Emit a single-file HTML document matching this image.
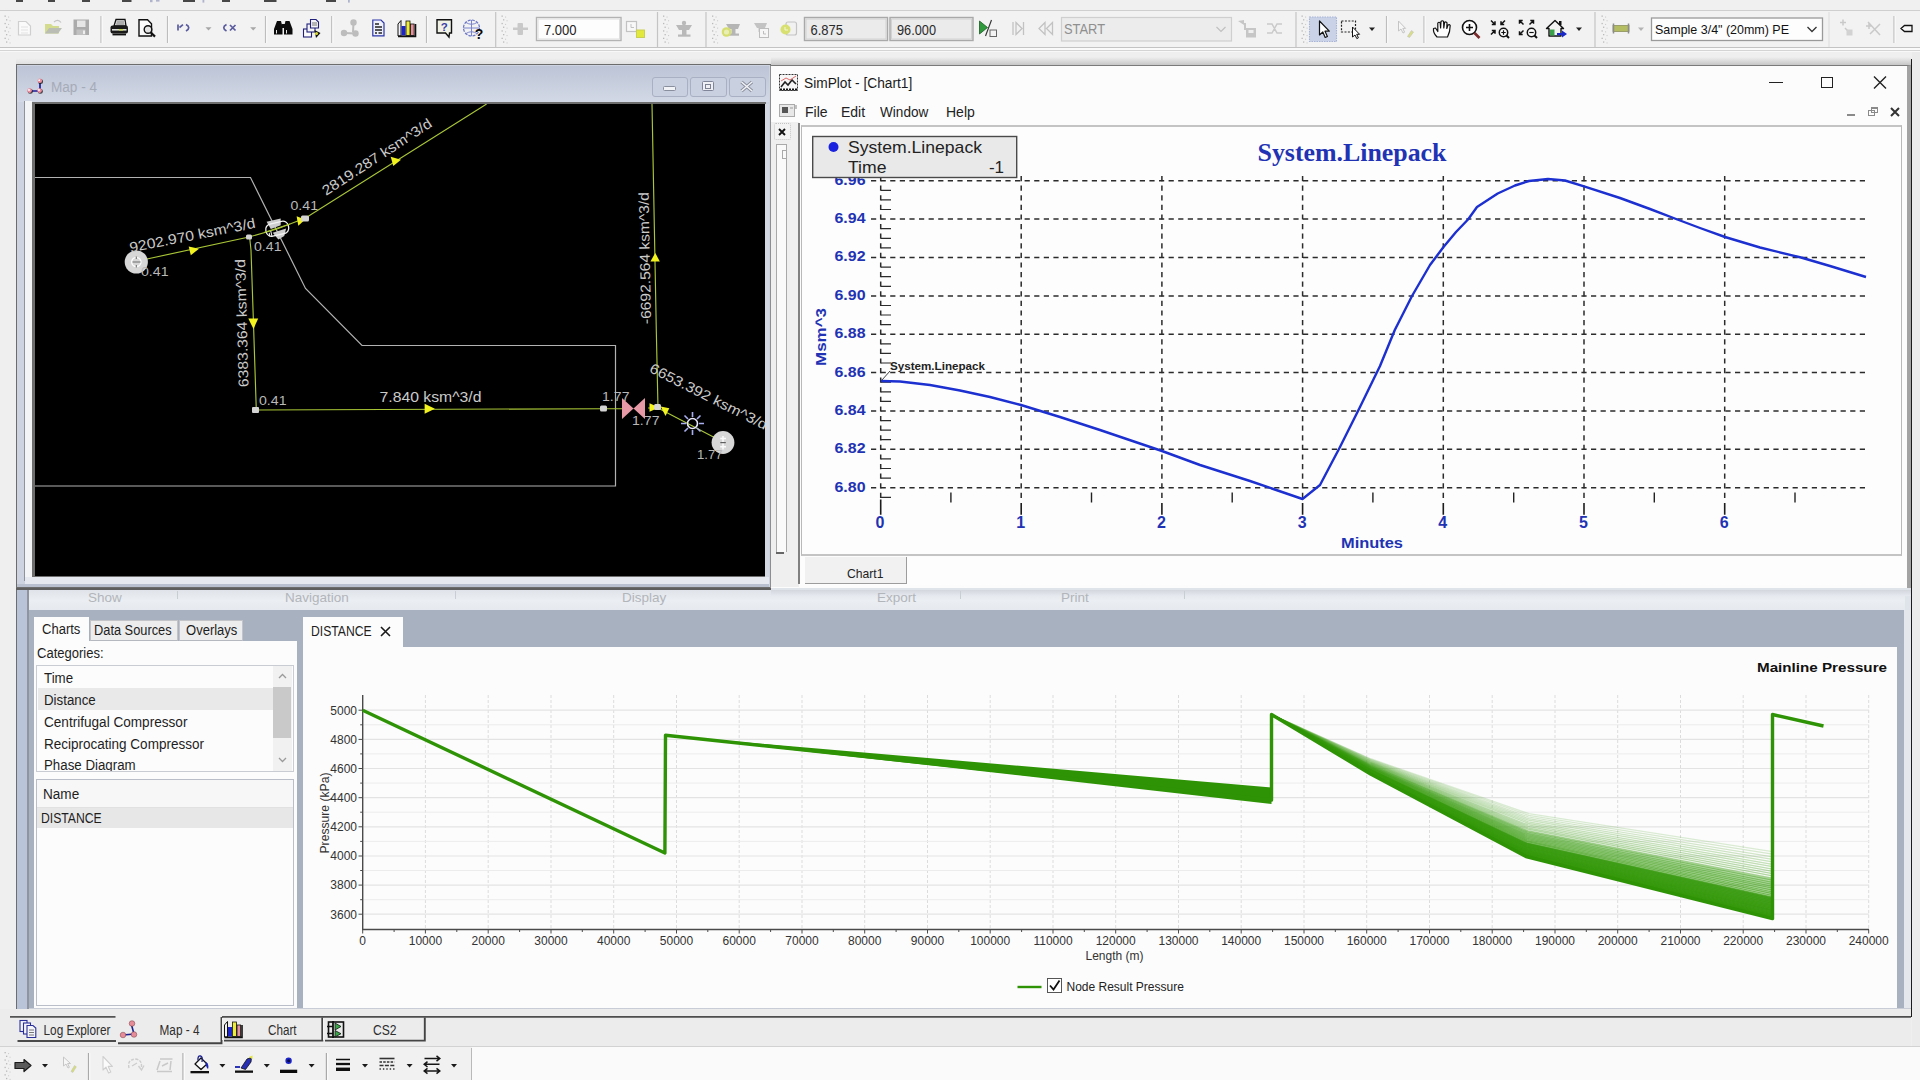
<!DOCTYPE html>
<html>
<head>
<meta charset="utf-8">
<title>SimPlot</title>
<style>
html,body{margin:0;padding:0;}
body{width:1920px;height:1080px;position:relative;overflow:hidden;background:#efefef;font-family:"Liberation Sans",sans-serif;font-size:14px;color:#222;}
.a{position:absolute;}
.t{position:absolute;white-space:pre;line-height:1;}
.sx{display:inline-block;transform-origin:0 50%;}
svg{position:absolute;overflow:visible;}
</style>
</head>
<body>

<!-- ===== TOP TOOLBAR ===== -->
<div id="topbar" class="a" style="left:0;top:0;width:1920px;height:52px;background:#f0f0f0;">
  <div class="a" style="left:0;top:10px;width:1920px;height:1.3px;background:#cfcfcf;"></div>
  <div class="a" style="left:0;top:11.3px;width:1920px;height:36px;background:#f2f2f2;"></div>
  <div class="a" style="left:0;top:47px;width:1920px;height:1.3px;background:#c3c3c3;"></div>
  <div class="a" style="left:0;top:48.3px;width:1920px;height:1.4px;background:#fafafa;"></div>
  <div class="a" style="left:0;top:49.7px;width:1920px;height:1px;background:#d4d4d4;"></div>
  <div class="a" style="left:0;top:50.7px;width:1920px;height:1.3px;background:#f8f8f8;"></div>
</div>
<svg style="left:0;top:0;" width="1920" height="52" viewBox="0 0 1920 52" font-family="Liberation Sans, sans-serif">
  <!-- menu remnants -->
  <g fill="#2a2a2a" opacity=".85">
    <rect x="16" y="0" width="7" height="2"/><rect x="48" y="0" width="7" height="2"/><rect x="82" y="0" width="8" height="2"/><rect x="122" y="0" width="9.5" height="2"/><rect x="183" y="0" width="12" height="2"/><rect x="222" y="0" width="8" height="2"/><rect x="264" y="0" width="12.5" height="2"/><rect x="326" y="0" width="10" height="2"/>
  </g>
  <g fill="#7c82b0" opacity=".55"><rect x="150" y="0" width="2.5" height="2.2"/><rect x="156" y="0" width="3.5" height="1.6"/><rect x="202.5" y="0" width="1.8" height="2.6"/><rect x="348" y="0" width="1.8" height="2.6"/></g>
  <rect x="4.5" y="15.5" width="1.3" height="1.3" fill="#b9b9b9"/><rect x="8.0" y="16.5" width="1.1" height="1.1" fill="#cdcdcd"/><rect x="6.0" y="19.2" width="1.3" height="1.3" fill="#b9b9b9"/><rect x="9.5" y="20.2" width="1.1" height="1.1" fill="#cdcdcd"/><rect x="4.5" y="22.9" width="1.3" height="1.3" fill="#b9b9b9"/><rect x="8.0" y="23.9" width="1.1" height="1.1" fill="#cdcdcd"/><rect x="6.0" y="26.6" width="1.3" height="1.3" fill="#b9b9b9"/><rect x="9.5" y="27.6" width="1.1" height="1.1" fill="#cdcdcd"/><rect x="4.5" y="30.3" width="1.3" height="1.3" fill="#b9b9b9"/><rect x="8.0" y="31.3" width="1.1" height="1.1" fill="#cdcdcd"/><rect x="6.0" y="34.0" width="1.3" height="1.3" fill="#b9b9b9"/><rect x="9.5" y="35.0" width="1.1" height="1.1" fill="#cdcdcd"/><rect x="4.5" y="37.7" width="1.3" height="1.3" fill="#b9b9b9"/><rect x="8.0" y="38.7" width="1.1" height="1.1" fill="#cdcdcd"/><rect x="6.0" y="41.4" width="1.3" height="1.3" fill="#b9b9b9"/><rect x="9.5" y="42.4" width="1.1" height="1.1" fill="#cdcdcd"/>
  <!-- new -->
  <path d="M18.5 21.5 L26 21.5 L30.5 26 L30.5 35 L18.5 35 Z" fill="#fafafa" stroke="#cfcfcf" stroke-width="1.2"/>
  <path d="M21 27 L28 27 M21 30 L28 30 M21 33 L28 33" stroke="#e2e2e2" stroke-width="1"/>
  <!-- open -->
  <path d="M45 24 L51 24 L53 26 L59 26 L59 33.5 L45 33.5 Z" fill="#d3dc8c"/>
  <path d="M45 33.5 L49 28 L62 28 L58 33.5 Z" fill="#b9bdb4"/>
  <path d="M54 22 Q58 18.5 61 22.5" stroke="#c4c4c4" stroke-width="1.2" fill="none"/>
  <!-- save -->
  <rect x="73.5" y="19.5" width="15.5" height="15.5" fill="#ababab"/>
  <rect x="77" y="20.5" width="8.5" height="6.5" fill="#e6e6e6"/>
  <rect x="76.5" y="29.5" width="9" height="5.5" fill="#c1c1c1"/><rect x="83" y="30.5" width="2" height="3.5" fill="#eee"/>
  <path d="M101 16 L101 43" stroke="#bdbdbd" stroke-width="1.2"/><path d="M102.2 16 L102.2 43" stroke="#fbfbfb" stroke-width="1"/>
  <!-- print -->
  <path d="M114 26 L116 19.5 L125 19.5 L126 26 Z" fill="#f4f4f4" stroke="#111" stroke-width="1.3"/>
  <path d="M116.5 22 L124 22 M116.2 24 L124.5 24" stroke="#444" stroke-width=".8"/>
  <rect x="110.5" y="25.5" width="17.5" height="8" rx="2" fill="#1a1a1a"/>
  <rect x="112" y="29" width="14.5" height="1.6" fill="#dcdcdc"/><rect x="119" y="29" width="4" height="1.6" fill="#c8d94a"/>
  <path d="M112.5 34.5 L126 34.5" stroke="#111" stroke-width="1.8"/>
  <!-- preview -->
  <path d="M139 19.8 L147.5 19.8 L151.5 23.8 L151.5 36 L139 36 Z" fill="#fbfbfb" stroke="#111" stroke-width="1.4"/>
  <circle cx="148" cy="29.5" r="3.8" fill="#e4e4e4" stroke="#111" stroke-width="1.4"/>
  <path d="M150.8 32.5 L155 36.6" stroke="#111" stroke-width="2.2"/>
  <path d="M167.5 16 L167.5 43" stroke="#bdbdbd" stroke-width="1.2"/><path d="M168.7 16 L168.7 43" stroke="#fbfbfb" stroke-width="1"/>
  <!-- undo / redo -->
  <g stroke="#383a8c" stroke-width="1.7" fill="none" opacity=".82">
    <path d="M178 24.5 L178 30.5"/><path d="M179.5 27.5 L183 24.7"/><path d="M186 24.6 Q191.5 27.5 186 31"/>
    <path d="M226.5 24.6 Q221 27.5 226.5 31"/><path d="M230 25 L235.5 30.5 M235.5 25 L230 30.5"/>
  </g>
  <path d="M205.5 27.2 L211.5 27.2 L208.5 30.599999999999998 Z" fill="#a7a7a7"/><path d="M250.2 27.2 L256.2 27.2 L253.2 30.599999999999998 Z" fill="#a7a7a7"/>
  <path d="M265.5 16 L265.5 43" stroke="#bdbdbd" stroke-width="1.2"/><path d="M266.7 16 L266.7 43" stroke="#fbfbfb" stroke-width="1"/>
  <!-- binoculars -->
  <g fill="#0c0c0c">
    <path d="M277 21 L281 21 L282.5 27 L282.5 34.5 L274 34.5 L274 29 Z"/>
    <path d="M285.5 21 L289.5 21 L292.5 29 L292.5 34.5 L284 34.5 L284 27 Z"/>
    <rect x="281.5" y="24" width="4" height="4"/>
  </g>
  <path d="M276.5 30 L276.5 33.5 M286.5 30 L286.5 33.5" stroke="#fff" stroke-width=".9"/>
  <!-- copy -->
  <rect x="303.5" y="29" width="8" height="8" fill="#fbfbfb" stroke="#20207a" stroke-width="1.1"/>
  <rect x="307" y="24" width="8" height="8" fill="#f4f4f4" stroke="#20207a" stroke-width="1.1"/>
  <path d="M310.5 19.5 L316 19.5 L318.5 22 L318.5 28 L310.5 28 Z" fill="#f4f4f4" stroke="#20207a" stroke-width="1.1"/>
  <path d="M312 23 L317 23 M312 25 L317 25" stroke="#555" stroke-width=".8"/>
  <path d="M314.5 30 L320.5 33 L316 38 Z" fill="#111"/><circle cx="316.5" cy="33.5" r="1.6" fill="#d9d936"/>
  <path d="M331.7 16 L331.7 43" stroke="#bdbdbd" stroke-width="1.2"/><path d="M332.9 16 L332.9 43" stroke="#fbfbfb" stroke-width="1"/>
  <!-- faded network -->
  <g fill="#bdbdbd"><circle cx="353.5" cy="22.5" r="3.2"/><circle cx="344" cy="33" r="3.2"/><circle cx="355.5" cy="33.5" r="3.2"/></g>
  <path d="M353.5 23 L353 32 M345 33 L355 33.5" stroke="#bdbdbd" stroke-width="2"/>
  <!-- doc blue -->
  <path d="M372.8 20 L381 20 L384 23 L384 35.8 L372.8 35.8 Z" fill="#eef0fb" stroke="#2b34a8" stroke-width="1.2"/>
  <path d="M375 24 L379 24 M375 27 L382 27 M375 30 L382 30 M375 33 L377 33 M378.5 33 L382 33" stroke="#222" stroke-width="1.3"/>
  <!-- books chart -->
  <path d="M398 24 L401 20.5 L401 36 L398 36 Z" fill="#f2f2f2" stroke="#111" stroke-width="1"/>
  <rect x="401.5" y="26" width="4" height="9.5" fill="#1a24c8"/>
  <rect x="406" y="21" width="4" height="14.5" fill="#ecec3a" stroke="#111" stroke-width=".8"/>
  <rect x="410.5" y="24" width="3.6" height="11.5" fill="#e5929c" stroke="#111" stroke-width=".8"/>
  <path d="M398 36.4 L415.5 36.4 L415.5 24" stroke="#111" stroke-width="1.6" fill="none"/>
  <path d="M426.5 16 L426.5 43" stroke="#bdbdbd" stroke-width="1.2"/><path d="M427.7 16 L427.7 43" stroke="#fbfbfb" stroke-width="1"/>
  <!-- help -->
  <path d="M437 19.8 L451.5 19.8 L451.5 33 L449.5 33 L449 37 L445.5 33 L437 33 Z" fill="#f0f2e6" stroke="#111" stroke-width="1.4"/>
  <text x="444.3" y="30.5" text-anchor="middle" font-size="11.5" font-weight="bold" fill="#3a40a8">?</text>
  <!-- globe -->
  <circle cx="471.5" cy="28" r="8" fill="none" stroke="#6a74c4" stroke-width="1.2" stroke-dasharray="3 1.2"/>
  <path d="M463.5 28 L479.5 28 M471.5 20 L471.5 36 M466 22.5 Q471.5 26 477 22.5 M466 33.5 Q471.5 30 477 33.5" stroke="#7a84cc" stroke-width="1" fill="none"/>
  <text x="479" y="38.5" text-anchor="middle" font-size="14" font-weight="bold" fill="#0a0a0a">?</text>
  <path d="M495.7 12 L495.7 47" stroke="#c4c4c4" stroke-width="1.2"/>
  <rect x="501.5" y="15.5" width="1.3" height="1.3" fill="#b9b9b9"/><rect x="505.0" y="16.5" width="1.1" height="1.1" fill="#cdcdcd"/><rect x="503.0" y="19.2" width="1.3" height="1.3" fill="#b9b9b9"/><rect x="506.5" y="20.2" width="1.1" height="1.1" fill="#cdcdcd"/><rect x="501.5" y="22.9" width="1.3" height="1.3" fill="#b9b9b9"/><rect x="505.0" y="23.9" width="1.1" height="1.1" fill="#cdcdcd"/><rect x="503.0" y="26.6" width="1.3" height="1.3" fill="#b9b9b9"/><rect x="506.5" y="27.6" width="1.1" height="1.1" fill="#cdcdcd"/><rect x="501.5" y="30.3" width="1.3" height="1.3" fill="#b9b9b9"/><rect x="505.0" y="31.3" width="1.1" height="1.1" fill="#cdcdcd"/><rect x="503.0" y="34.0" width="1.3" height="1.3" fill="#b9b9b9"/><rect x="506.5" y="35.0" width="1.1" height="1.1" fill="#cdcdcd"/><rect x="501.5" y="37.7" width="1.3" height="1.3" fill="#b9b9b9"/><rect x="505.0" y="38.7" width="1.1" height="1.1" fill="#cdcdcd"/><rect x="503.0" y="41.4" width="1.3" height="1.3" fill="#b9b9b9"/><rect x="506.5" y="42.4" width="1.1" height="1.1" fill="#cdcdcd"/>
  <!-- faded -->
  <g fill="#c9c9c9"><rect x="517.5" y="23" width="5.5" height="12" rx="1"/><rect x="513" y="27.5" width="15" height="2.5"/></g>
  <rect x="536.5" y="17.5" width="84.5" height="23" fill="#fdfdfd" stroke="#b3b3b3" stroke-width="1.4"/>
  <rect x="538" y="19" width="81.5" height="20" fill="none" stroke="#dedede" stroke-width="1"/>
  <text x="544" y="34.5" font-size="14.5" fill="#222" textLength="32.5" lengthAdjust="spacingAndGlyphs">7.000</text>
  <rect x="626.5" y="21.5" width="10" height="10" fill="#f8f8f8" stroke="#c2c2c2" stroke-width="1.2"/><path d="M631 24 L631 27.5 L634 27.5" stroke="#c2c2c2" stroke-width="1" fill="none"/>
  <rect x="636.5" y="30" width="8" height="7.5" fill="#e3e83c" stroke="#c9cf50" stroke-width="1"/>
  <path d="M657.5 12 L657.5 47" stroke="#c4c4c4" stroke-width="1.2"/>
  <rect x="663" y="15.5" width="1.3" height="1.3" fill="#b9b9b9"/><rect x="666.5" y="16.5" width="1.1" height="1.1" fill="#cdcdcd"/><rect x="664.5" y="19.2" width="1.3" height="1.3" fill="#b9b9b9"/><rect x="668.0" y="20.2" width="1.1" height="1.1" fill="#cdcdcd"/><rect x="663" y="22.9" width="1.3" height="1.3" fill="#b9b9b9"/><rect x="666.5" y="23.9" width="1.1" height="1.1" fill="#cdcdcd"/><rect x="664.5" y="26.6" width="1.3" height="1.3" fill="#b9b9b9"/><rect x="668.0" y="27.6" width="1.1" height="1.1" fill="#cdcdcd"/><rect x="663" y="30.3" width="1.3" height="1.3" fill="#b9b9b9"/><rect x="666.5" y="31.3" width="1.1" height="1.1" fill="#cdcdcd"/><rect x="664.5" y="34.0" width="1.3" height="1.3" fill="#b9b9b9"/><rect x="668.0" y="35.0" width="1.1" height="1.1" fill="#cdcdcd"/><rect x="663" y="37.7" width="1.3" height="1.3" fill="#b9b9b9"/><rect x="666.5" y="38.7" width="1.1" height="1.1" fill="#cdcdcd"/><rect x="664.5" y="41.4" width="1.3" height="1.3" fill="#b9b9b9"/><rect x="668.0" y="42.4" width="1.1" height="1.1" fill="#cdcdcd"/>
  <g fill="#b9b9b9"><path d="M676 25 L692 25 L689 30 L679 30 Z"/><rect x="682" y="29" width="4.5" height="6"/><rect x="678" y="34.5" width="12.5" height="2.2"/><circle cx="684" cy="23" r="2.2"/></g>
  <path d="M706 12 L706 47" stroke="#c4c4c4" stroke-width="1.2"/>
  <rect x="712" y="15.5" width="1.3" height="1.3" fill="#b9b9b9"/><rect x="715.5" y="16.5" width="1.1" height="1.1" fill="#cdcdcd"/><rect x="713.5" y="19.2" width="1.3" height="1.3" fill="#b9b9b9"/><rect x="717.0" y="20.2" width="1.1" height="1.1" fill="#cdcdcd"/><rect x="712" y="22.9" width="1.3" height="1.3" fill="#b9b9b9"/><rect x="715.5" y="23.9" width="1.1" height="1.1" fill="#cdcdcd"/><rect x="713.5" y="26.6" width="1.3" height="1.3" fill="#b9b9b9"/><rect x="717.0" y="27.6" width="1.1" height="1.1" fill="#cdcdcd"/><rect x="712" y="30.3" width="1.3" height="1.3" fill="#b9b9b9"/><rect x="715.5" y="31.3" width="1.1" height="1.1" fill="#cdcdcd"/><rect x="713.5" y="34.0" width="1.3" height="1.3" fill="#b9b9b9"/><rect x="717.0" y="35.0" width="1.1" height="1.1" fill="#cdcdcd"/><rect x="712" y="37.7" width="1.3" height="1.3" fill="#b9b9b9"/><rect x="715.5" y="38.7" width="1.1" height="1.1" fill="#cdcdcd"/><rect x="713.5" y="41.4" width="1.3" height="1.3" fill="#b9b9b9"/><rect x="717.0" y="42.4" width="1.1" height="1.1" fill="#cdcdcd"/>
  <g fill="#b5b5b5"><path d="M726 24 L740 24 L738 29 L729 29 Z"/><rect x="731.5" y="28" width="4" height="6"/><rect x="728" y="33.5" width="11" height="2.2"/></g>
  <circle cx="726.5" cy="32" r="4.8" fill="#d5de6e"/><circle cx="726.5" cy="32" r="2.6" fill="#e9eeb4"/>
  <g fill="#c3c3c3"><path d="M754 23 L767 23 L765 28 L757 28 Z"/><rect x="758.5" y="27" width="4" height="5"/></g>
  <rect x="759.5" y="28.5" width="9" height="9" fill="#f6f6f6" stroke="#bdbdbd" stroke-width="1"/><path d="M763.5 31 L763.5 34 L766 34" stroke="#bdbdbd" fill="none"/>
  <rect x="786" y="22" width="10.5" height="13" rx="2" fill="#f1f1f1" stroke="#c4c4c4" stroke-width="1.2"/>
  <circle cx="785.5" cy="29.5" r="5" fill="#d7e070"/><path d="M785 27 L785 30 L788 30" stroke="#f4f6d4" fill="none"/>
  <rect x="804.5" y="17.5" width="83" height="23" fill="#ebebeb" stroke="#a9a9a9" stroke-width="1.4"/>
  <rect x="806" y="19" width="80" height="20" fill="none" stroke="#d2d2d2" stroke-width="1"/>
  <text x="810.5" y="34.5" font-size="14.5" fill="#2a2a2a" textLength="32.5" lengthAdjust="spacingAndGlyphs">6.875</text>
  <rect x="890" y="17.5" width="83" height="23" fill="#ebebeb" stroke="#a9a9a9" stroke-width="1.4"/>
  <rect x="891.5" y="19" width="80" height="20" fill="none" stroke="#d2d2d2" stroke-width="1"/>
  <text x="897" y="34.5" font-size="14.5" fill="#2a2a2a" textLength="39" lengthAdjust="spacingAndGlyphs">96.000</text>
  <!-- play -->
  <path d="M979.5 21 L979.5 34 L987.5 27.5 Z" fill="#2f9a3c" stroke="#1a5a22" stroke-width=".8"/>
  <path d="M991.5 20 L985.5 36" stroke="#333" stroke-width="1.2"/>
  <rect x="990" y="30" width="6.5" height="6.5" fill="#f4f4f4" stroke="#666" stroke-width="1"/>
  <g fill="none" stroke="#c2c2c2" stroke-width="1.3"><path d="M1013 22 L1013 35 M1016 22.5 L1022 28.5 L1016 34.5 Z M1023.5 22 L1023.5 35"/><path d="M1045 22.5 L1039 28.5 L1045 34.5 Z M1052.5 22.5 L1046.5 28.5 L1052.5 34.5 Z"/></g>
  <rect x="1061.5" y="17.5" width="170" height="23.5" fill="#ececec" stroke="#cfcfcf" stroke-width="1.2"/>
  <text x="1064" y="34" font-size="14.5" fill="#8f8f8f" textLength="41" lengthAdjust="spacingAndGlyphs">START</text>
  <path d="M1216.5 27 L1221 31.5 L1225.5 27" stroke="#c0c0c0" stroke-width="1.2" fill="none"/>
  <g fill="#c6c6c6"><path d="M1238 21 L1244 25 L1244 20 Z"/><rect x="1244" y="23" width="2" height="7"/><rect x="1246" y="28" width="10" height="9.5"/></g>
  <rect x="1248.5" y="30" width="5" height="3" fill="#efefef"/>
  <path d="M1267 24 L1272 24 L1277 33 L1282 33 M1267 33 L1272 33 L1277 24 L1282 24" stroke="#cacaca" stroke-width="1.5" fill="none"/>
  <path d="M1296 12 L1296 47" stroke="#c4c4c4" stroke-width="1.2"/>
  <rect x="1301.5" y="15.5" width="1.3" height="1.3" fill="#b9b9b9"/><rect x="1305.0" y="16.5" width="1.1" height="1.1" fill="#cdcdcd"/><rect x="1303.0" y="19.2" width="1.3" height="1.3" fill="#b9b9b9"/><rect x="1306.5" y="20.2" width="1.1" height="1.1" fill="#cdcdcd"/><rect x="1301.5" y="22.9" width="1.3" height="1.3" fill="#b9b9b9"/><rect x="1305.0" y="23.9" width="1.1" height="1.1" fill="#cdcdcd"/><rect x="1303.0" y="26.6" width="1.3" height="1.3" fill="#b9b9b9"/><rect x="1306.5" y="27.6" width="1.1" height="1.1" fill="#cdcdcd"/><rect x="1301.5" y="30.3" width="1.3" height="1.3" fill="#b9b9b9"/><rect x="1305.0" y="31.3" width="1.1" height="1.1" fill="#cdcdcd"/><rect x="1303.0" y="34.0" width="1.3" height="1.3" fill="#b9b9b9"/><rect x="1306.5" y="35.0" width="1.1" height="1.1" fill="#cdcdcd"/><rect x="1301.5" y="37.7" width="1.3" height="1.3" fill="#b9b9b9"/><rect x="1305.0" y="38.7" width="1.1" height="1.1" fill="#cdcdcd"/><rect x="1303.0" y="41.4" width="1.3" height="1.3" fill="#b9b9b9"/><rect x="1306.5" y="42.4" width="1.1" height="1.1" fill="#cdcdcd"/>
  <!-- pointer selected -->
  <rect x="1309.5" y="17" width="27" height="24.5" fill="#c9d2e7" stroke="#a7b4d6" stroke-width="1.1" stroke-dasharray="1.5 1"/>
  <path d="M1319.5 21 L1319.5 35 L1322.8 32 L1325.2 37.5 L1327.4 36.5 L1325 31.2 L1329.3 31.2 Z" fill="#fff" stroke="#111" stroke-width="1.2" stroke-linejoin="round"/>
  <!-- select rect -->
  <rect x="1341.5" y="21" width="14" height="11" fill="none" stroke="#222" stroke-width="1.2" stroke-dasharray="2 1.4"/>
  <path d="M1352.5 27 L1352.5 37 L1355 35 L1356.8 38.6 L1358.4 37.8 L1356.7 34.3 L1359.6 34.3 Z" fill="#fff" stroke="#111" stroke-width="1"/>
  <path d="M1369 27.5 L1375 27.5 L1372 30.9 Z" fill="#222"/>
  <path d="M1386.5 16 L1386.5 43" stroke="#bdbdbd" stroke-width="1.2"/><path d="M1387.7 16 L1387.7 43" stroke="#fbfbfb" stroke-width="1"/>
  <path d="M1398.5 21 L1398.5 31 L1401 29 L1403 33 L1404.6 32.2 L1402.8 28.4 L1405.6 28.4 Z" fill="#f6f6f6" stroke="#c4c4c4" stroke-width="1"/>
  <path d="M1407.5 36.5 L1411.5 30.5 L1413.5 32 L1409.5 37.5 Z" fill="#d9df7c" stroke="#c4c4c4" stroke-width=".7"/>
  <path d="M1424 16 L1424 43" stroke="#bdbdbd" stroke-width="1.2"/><path d="M1425.2 16 L1425.2 43" stroke="#fbfbfb" stroke-width="1"/>
  <!-- hand -->
  <path d="M1437 37 Q1433 33 1433.5 28.5 L1435.5 28 L1437.8 31.5 L1437.8 23 Q1439 21.5 1440.2 23 L1440.6 28 L1441 21.5 Q1442.3 20 1443.6 21.5 L1443.8 28 L1444.6 22.5 Q1446 21.3 1447 22.8 L1446.8 28.5 L1448 25 Q1449.5 24 1450.2 25.6 Q1450.2 32 1447.5 37 Z" fill="#fdfdfd" stroke="#111" stroke-width="1.2" stroke-linejoin="round"/>
  <!-- zoom + -->
  <circle cx="1469.5" cy="27.5" r="7" fill="#fdfdfd" stroke="#111" stroke-width="1.6"/>
  <path d="M1466 27.5 L1473 27.5 M1469.5 24 L1469.5 31" stroke="#111" stroke-width="1.6"/>
  <path d="M1474.5 33 L1479.5 38" stroke="#7a2a2a" stroke-width="2.6"/>
  <!-- zoom region + -->
  <g stroke="#111" stroke-width="1.5" fill="none">
    <path d="M1491 20.5 L1495 24.5 M1495 21.3 L1495 24.5 L1491.8 24.5 M1505 20.5 L1501 24.5 M1501 21.3 L1501 24.5 L1504.2 24.5 M1491 34.5 L1495 30.5 M1495 33.7 L1495 30.5 L1491.8 30.5"/>
    <circle cx="1503.5" cy="32.5" r="4.2" fill="#fdfdfd"/><path d="M1501.3 32.5 L1505.7 32.5 M1503.5 30.3 L1503.5 34.7" stroke-width="1.2"/><path d="M1506.5 35.5 L1509 38" stroke-width="2"/>
  </g>
  <!-- zoom region - -->
  <g stroke="#111" stroke-width="1.5" fill="none">
    <path d="M1523.5 24.5 L1519.5 20.5 M1519.5 23.7 L1519.5 20.5 L1522.7 20.5 M1529.5 24.5 L1533.5 20.5 M1533.5 23.7 L1533.5 20.5 L1530.3 20.5 M1523.5 30.5 L1519.5 34.5 M1519.5 31.3 L1519.5 34.5 L1522.7 34.5"/>
    <circle cx="1531.5" cy="32.5" r="4.2" fill="#fdfdfd"/><path d="M1529.3 32.5 L1533.7 32.5" stroke-width="1.2"/><path d="M1534.5 35.5 L1537 38" stroke-width="2"/>
  </g>
  <!-- home -->
  <path d="M1546.5 28.5 L1555 20.5 L1563.5 28.5 L1561 28.5 L1561 36 L1549 36 L1549 28.5 Z" fill="#f2f2f2" stroke="#111" stroke-width="1.4" stroke-linejoin="round"/>
  <rect x="1550" y="29.5" width="4.5" height="6" fill="#3aa04a"/>
  <path d="M1557 33 L1562 33 L1562 30.5 L1567 34 L1562 37.5 L1562 35.2 L1557 35.2 Z" fill="#1a28c8"/>
  <rect x="1559" y="21" width="2.5" height="4" fill="#111"/>
  <path d="M1576 27.5 L1582 27.5 L1579 30.9 Z" fill="#222"/>
  <path d="M1595 12 L1595 47" stroke="#c4c4c4" stroke-width="1.2"/>
  <rect x="1601.5" y="15.5" width="1.3" height="1.3" fill="#b9b9b9"/><rect x="1605.0" y="16.5" width="1.1" height="1.1" fill="#cdcdcd"/><rect x="1603.0" y="19.2" width="1.3" height="1.3" fill="#b9b9b9"/><rect x="1606.5" y="20.2" width="1.1" height="1.1" fill="#cdcdcd"/><rect x="1601.5" y="22.9" width="1.3" height="1.3" fill="#b9b9b9"/><rect x="1605.0" y="23.9" width="1.1" height="1.1" fill="#cdcdcd"/><rect x="1603.0" y="26.6" width="1.3" height="1.3" fill="#b9b9b9"/><rect x="1606.5" y="27.6" width="1.1" height="1.1" fill="#cdcdcd"/><rect x="1601.5" y="30.3" width="1.3" height="1.3" fill="#b9b9b9"/><rect x="1605.0" y="31.3" width="1.1" height="1.1" fill="#cdcdcd"/><rect x="1603.0" y="34.0" width="1.3" height="1.3" fill="#b9b9b9"/><rect x="1606.5" y="35.0" width="1.1" height="1.1" fill="#cdcdcd"/><rect x="1601.5" y="37.7" width="1.3" height="1.3" fill="#b9b9b9"/><rect x="1605.0" y="38.7" width="1.1" height="1.1" fill="#cdcdcd"/><rect x="1603.0" y="41.4" width="1.3" height="1.3" fill="#b9b9b9"/><rect x="1606.5" y="42.4" width="1.1" height="1.1" fill="#cdcdcd"/>
  <rect x="1613" y="25.5" width="16" height="6" fill="#b5bd62" stroke="#8a8f5c" stroke-width=".8"/>
  <path d="M1613.5 23.5 L1613.5 33.5 M1628.5 23.5 L1628.5 33.5" stroke="#8c8c8c" stroke-width="1.5"/>
  <path d="M1638 27.5 L1644 27.5 L1641 30.9 Z" fill="#b3b3b3"/>
  <rect x="1651.5" y="18" width="171" height="22.5" fill="#fdfdfd" stroke="#9a9a9a" stroke-width="1.3"/>
  <text x="1655" y="33.5" font-size="13.5" fill="#111" textLength="134" lengthAdjust="spacingAndGlyphs">Sample  3/4" (20mm) PE</text>
  <path d="M1807.5 27 L1812 31.5 L1816.5 27" stroke="#333" stroke-width="1.3" fill="none"/>
  <path d="M1829 12 L1829 47" stroke="#dcdcdc" stroke-width="1"/>
  <g stroke="#c9c9c9" stroke-width="1.5" fill="none"><path d="M1840 22.5 L1846 22.5 M1843 19.5 L1843 25.5"/><path d="M1845 28 L1848 31"/><rect x="1846.5" y="29.5" width="6" height="6" fill="#d2d2d2" stroke="none"/>
  <path d="M1868 22 L1880 35 M1880 24 L1870 34 M1866 26 L1872 26 M1869 23 L1869 29"/></g>
  <path d="M1894 16 L1894 43" stroke="#bdbdbd" stroke-width="1.2"/><path d="M1895.2 16 L1895.2 43" stroke="#fbfbfb" stroke-width="1"/>
  <path d="M1901 28.5 L1904.5 25.5 L1912 25.5 L1912 31.5 L1904.5 31.5 Z" fill="#f8f8f8" stroke="#111" stroke-width="1.3"/>
</svg>

<!-- ===== MAP WINDOW ===== -->
<div id="mapwin" class="a" style="left:15.5px;top:64px;width:755px;height:524px;background:#cdd3e0;box-sizing:border-box;border:1.6px solid #6c6c6c;border-right:1.2px solid #666;"></div>
<!-- map title bar -->
<div class="a" style="left:17px;top:65.6px;width:752px;height:36px;background:linear-gradient(#bdc4d6,#c6cddc 45%,#d3d9e6);"></div>
<div class="t" style="left:50.5px;top:80px;font-size:14px;color:#a6abb8;"><span class="sx" style="transform:scaleX(.97)">Map - 4</span></div>
<svg style="left:26px;top:76px;" width="22" height="22" viewBox="0 0 22 22">
  <path d="M4 15 L14 15 L14 5" stroke="#1d1d9a" stroke-width="1.7" fill="none"/>
  <circle cx="4.3" cy="15.3" r="2.5" fill="#1a1a1a" opacity=".8"/><circle cx="14.3" cy="15.3" r="2.5" fill="#1a1a1a" opacity=".8"/><circle cx="14.5" cy="5.5" r="2.5" fill="#1a1a1a" opacity=".8"/>
  <circle cx="3.6" cy="14.6" r="2.3" fill="#ee8fa0"/><circle cx="13.6" cy="14.6" r="2.3" fill="#ee8fa0"/><circle cx="13.8" cy="4.8" r="2.3" fill="#ee8fa0"/>
  <circle cx="3" cy="14" r=".9" fill="#fff"/><circle cx="13" cy="14" r=".9" fill="#fff"/><circle cx="13.2" cy="4.2" r=".9" fill="#fff"/>
</svg>
<!-- map caption buttons -->
<div class="a" style="left:651.5px;top:76.5px;width:36.5px;height:20px;border:1px solid #a9b0c4;border-radius:3px;background:#c9d0df;box-sizing:border-box;"></div>
<div class="a" style="left:690.3px;top:76.5px;width:36.5px;height:20px;border:1px solid #a9b0c4;border-radius:3px;background:#c9d0df;box-sizing:border-box;"></div>
<div class="a" style="left:729px;top:76.5px;width:37px;height:20px;border:1px solid #a9b0c4;border-radius:3px;background:#c9d0df;box-sizing:border-box;"></div>
<div class="a" style="left:663px;top:85.8px;width:12.5px;height:5.5px;border:1.2px solid #8a8f9e;border-radius:1.5px;background:#f2f3f6;box-sizing:border-box;"></div>
<div class="a" style="left:701.7px;top:81.2px;width:12.5px;height:10.2px;border:1.3px solid #80859a;border-radius:1.5px;background:#eef0f4;box-sizing:border-box;"></div>
<div class="a" style="left:704.7px;top:84.2px;width:6.5px;height:4.4px;border:1.2px solid #7d8294;box-sizing:border-box;"></div>
<svg style="left:740px;top:80.8px;" width="14" height="11" viewBox="0 0 14 11"><path d="M1.5 1 L12 10 M12 1 L1.5 10" stroke="#8a8f9e" stroke-width="3.4"/><path d="M1.5 1 L12 10 M12 1 L1.5 10" stroke="#f2f3f6" stroke-width="1.5"/></svg>
<!-- map frame -->
<div class="a" style="left:24.3px;top:100.5px;width:1px;height:480px;background:#8e929c;"></div>
<div class="a" style="left:25.3px;top:100.5px;width:7px;height:478px;background:#f3f4f6;"></div>
<div class="a" style="left:32.3px;top:101.6px;width:734px;height:476px;background:#6e6e6e;"></div>
<div class="a" style="left:765.3px;top:103.8px;width:3.9px;height:476px;background:#d3d8e3;"></div>
<div class="a" style="left:25.3px;top:576.5px;width:744px;height:7px;background:#e6e9ef;"></div>
<div class="a" style="left:17px;top:583.5px;width:752px;height:3px;background:#b9c0cf;"></div>
<div id="mapblack" class="a" style="left:35.3px;top:103.8px;width:730px;height:472.4px;background:#000;overflow:hidden;">
<svg style="left:-35.3px;top:-103.8px;" width="1920" height="1080" viewBox="0 0 1920 1080" font-family="Liberation Sans, sans-serif">
  <!-- gray polygon outline -->
  <path d="M35 177.5 L250.5 177.5 L305.5 288.5 L362 345.5 L615.5 345.5 L615.5 486 L35 486" fill="none" stroke="#b2b2b2" stroke-width="1.2"/>
  <!-- pipes -->
  <g stroke="#a9c636" stroke-width="1.15" fill="none">
    <path d="M147 259 L249 237 L277 229 L305.5 218 L486.6 104"/>
    <path d="M249.6 237 L251 250 L253.7 330 L256.3 410 L603 408.7 L622 408.7"/>
    <path d="M652 104 L656.3 330 L658 408 L648 408"/>
    <path d="M658 408 L723 442"/>
  </g>
  <!-- arrows -->
  <g fill="#f2f21e">
    <path d="M188.7 246.6 L199.0 248.7 L190.8 255.2 Z"/>
    <path d="M296.6 216.2 L305.2 219.6 L298.3 225.7 Z"/>
    <path d="M390.7 156.7 L401.0 159.7 L393.3 166.1 Z"/>
    <path d="M248.3 318.6 L258.2 318.6 L253.5 328.9 Z"/>
    <path d="M424.6 403.8 L434.9 408.7 L424.6 413.7 Z"/>
    <path d="M650.8 251.5 L660.2 251.5 L655.3 260.1 Z" transform="rotate(180 655.3 256.5)"/>
    <path d="M649.5 403.2 L659.0 407.5 L649.5 411.8 Z"/>
    <path d="M660.7 406.6 L669.3 408.3 L665.5 416.1 Z"/>
  </g>
  <!-- nodes -->
  <g fill="#d4d4d4">
    <rect x="246" y="234.5" width="6" height="5" rx="1.5"/>
    <rect x="301" y="215.5" width="8" height="6" rx="1.5"/>
    <rect x="252" y="407" width="7" height="6" rx="1"/>
    <rect x="600" y="405.5" width="7" height="6" rx="1.5"/>
    <rect x="654" y="404" width="7" height="6" rx="1.5"/>
  </g>
  <!-- source/sink circles -->
  <circle cx="136.3" cy="262" r="11.6" fill="#d7d7d7"/>
  <circle cx="136.3" cy="262" r="4.6" fill="none" stroke="#fbfbfb" stroke-width="1.5"/>
  <path d="M132.5 262 L140.5 262 M136.3 256.5 L136.3 259 M136.3 265 L136.3 267.5" stroke="#6e6e6e" stroke-width="1.1"/>
  <circle cx="723" cy="442.5" r="11.4" fill="#d7d7d7"/>
  <path d="M720.2 438.5 L726 438.5 M720.2 446.8 L726 446.8 M723 436 L723 449.5" stroke="#fbfbfb" stroke-width="1.5"/>
  <path d="M720.3 442.6 L725.8 442.6" stroke="#5e5e5e" stroke-width="1.2"/>
  <!-- compressor-ish device -->
  <g transform="rotate(-13 277.3 229)">
    <path d="M268.5 219.5 L283 219.5 L281.5 226 L271 227.5 Z" fill="#cdcdcd"/>
    <path d="M272 231.5 L286 230.5 L282.5 237.5 L276 239.5 Z" fill="#cdcdcd"/>
    <rect x="265.8" y="222.5" width="23" height="12.5" rx="5.5" fill="none" stroke="#f2f2f2" stroke-width="1.3"/>
    <path d="M270.5 229 L270.5 235 M268.5 231 L268.5 234.5" stroke="#f2f2f2" stroke-width="1"/>
  </g>
  <path d="M264 232.5 L290 224" stroke="#a9c636" stroke-width="1.15"/>
  <!-- valve -->
  <path d="M622 398 L645 419 L645 398 L622 419 Z" fill="#e79aa6"/>
    <!-- star symbol -->
  <g stroke="#a9aef0" stroke-width="1.6" fill="none">
    <circle cx="692.5" cy="423.5" r="5" stroke="#e8e8ff"/>
    <path d="M692.5 412 L692.5 417 M692.5 430 L692.5 435 M681 423.5 L686 423.5 M699 423.5 L704 423.5 M684.5 415.5 L688 419 M697 428 L700.5 431.5 M700.5 415.5 L697 419 M688 428 L684.5 431.5"/>
  </g>
  <!-- labels -->
  <g fill="#cbcbcb" font-size="14.2">
    <text x="0" y="0" transform="translate(130.5 252.5) rotate(-11.2)" textLength="128" lengthAdjust="spacingAndGlyphs">9202.970 ksm^3/d</text>
    <text x="0" y="0" transform="translate(326 196) rotate(-33.2)" textLength="128" lengthAdjust="spacingAndGlyphs">2819.287 ksm^3/d</text>
    <text x="0" y="0" transform="translate(248.6 387) rotate(-91.6)" textLength="128" lengthAdjust="spacingAndGlyphs">6383.364 ksm^3/d</text>
    <text x="0" y="0" transform="translate(651 324) rotate(-91.1)" textLength="132" lengthAdjust="spacingAndGlyphs">-6692.564 ksm^3/d</text>
    <text x="0" y="0" transform="translate(648.5 371.5) rotate(26.8)" textLength="130" lengthAdjust="spacingAndGlyphs">6653.392 ksm^3/d</text>
    <text x="379.5" y="402" textLength="102" lengthAdjust="spacingAndGlyphs">7.840 ksm^3/d</text>
  </g>
  <g fill="#b9b9b9" font-size="13.6">
    <text x="290.5" y="210.3" textLength="27.5" lengthAdjust="spacingAndGlyphs">0.41</text>
    <text x="254" y="251" textLength="27.5" lengthAdjust="spacingAndGlyphs">0.41</text>
    <text x="141" y="275.5" textLength="27.5" lengthAdjust="spacingAndGlyphs">0.41</text>
    <text x="259" y="404.5" textLength="27.5" lengthAdjust="spacingAndGlyphs">0.41</text>
    <text x="602" y="401" textLength="27.5" lengthAdjust="spacingAndGlyphs">1.77</text>
    <text x="632" y="425" textLength="27.5" lengthAdjust="spacingAndGlyphs">1.77</text>
    <text x="697" y="459" textLength="25.5" lengthAdjust="spacingAndGlyphs">1.77</text>
  </g>
</svg>
</div>

<!-- ===== SIMPLOT WINDOW ===== -->
<div class="a" style="left:771px;top:56.5px;width:1140px;height:8px;background:linear-gradient(rgba(0,0,0,0),rgba(0,0,0,.17));"></div>
<div class="a" style="left:16px;top:58px;width:755px;height:6px;background:linear-gradient(rgba(0,0,0,0),rgba(0,0,0,.06));"></div>
<div id="simwin" class="a" style="left:770px;top:64.6px;width:1140.8px;height:525px;background:#fcfcfc;box-sizing:border-box;border-left:1px solid #8e8e8e;border-top:1.5px solid #7a7a7a;border-right:4.6px solid #a3a3a3;border-bottom:2px solid #949494;">
</div>

<!-- simplot title -->
<svg style="left:778px;top:72px;" width="21" height="21" viewBox="0 0 21 21">
  <rect x="1.5" y="2.5" width="18" height="16" fill="#f6f6f6" stroke="#333" stroke-width="1" stroke-dasharray="2 1"/>
  <path d="M3 15 L7 10 L10 13 L14 8 L18 12" stroke="#222" stroke-width="1.6" fill="none"/>
  <path d="M3 9 L8 6 L12 8 L18 4" stroke="#e06a6a" stroke-width="1" fill="none"/>
  <path d="M2 17.5 L19 17.5" stroke="#111" stroke-width="2" stroke-dasharray="2 1"/>
</svg>
<div class="t" style="left:804px;top:76px;font-size:14px;color:#1a1a1a;"><span class="sx" style="transform:scaleX(.98)">SimPlot - [Chart1]</span></div>
<div class="a" style="left:1769px;top:82px;width:14px;height:1.4px;background:#222;"></div>
<div class="a" style="left:1821px;top:77px;width:12px;height:11px;border:1.4px solid #222;box-sizing:border-box;"></div>
<svg style="left:1873px;top:76px;" width="14" height="13" viewBox="0 0 14 13"><path d="M1 .5 L13 12.5 M13 .5 L1 12.5" stroke="#222" stroke-width="1.4"/></svg>
<!-- simplot menu -->
<svg style="left:779px;top:104px;" width="20" height="15" viewBox="0 0 20 15">
  <rect x=".5" y=".5" width="15" height="12" fill="#e8e8e8" stroke="#aaa"/>
  <rect x="3" y="3" width="6" height="6" fill="#555"/>
  <path d="M11 4 L14 4 M17 1 L17 5" stroke="#999" stroke-width="1.2"/>
</svg>
<div class="t" style="left:805px;top:105px;font-size:14px;color:#222;">File</div>
<div class="t" style="left:841px;top:105px;font-size:14px;color:#222;">Edit</div>
<div class="t" style="left:880px;top:105px;font-size:14px;color:#222;"><span class="sx" style="transform:scaleX(.97)">Window</span></div>
<div class="t" style="left:946px;top:105px;font-size:14px;color:#222;">Help</div>
<div class="a" style="left:1847px;top:114px;width:7.5px;height:2px;background:#8a8a8a;"></div>
<div class="a" style="left:1868px;top:110px;width:7px;height:6px;border:1px solid #8a8a8a;box-sizing:border-box;"></div>
<div class="a" style="left:1871px;top:107px;width:7px;height:6px;border:1px solid #8a8a8a;border-top-width:2px;box-sizing:border-box;"></div>
<svg style="left:1890px;top:107px;" width="10" height="10" viewBox="0 0 10 10"><path d="M1 1 L9 9 M9 1 L1 9" stroke="#333" stroke-width="2"/></svg>
<!-- simplot left strip -->
<div class="a" style="left:771px;top:122px;width:28px;height:465px;background:#efefef;"></div>
<div class="a" style="left:774.3px;top:123.3px;width:16.4px;height:16.8px;border:1px dotted #c2c2c2;border-radius:2px;background:#f3f3f3;box-sizing:border-box;"></div>
<svg style="left:778.3px;top:128.2px;" width="8" height="8" viewBox="0 0 8 8"><path d="M1 1 L7 7 M7 1 L1 7" stroke="#111" stroke-width="1.9"/></svg>
<div class="a" style="left:776px;top:144px;width:11.4px;height:408px;border:1px solid #a9a9a9;border-bottom:none;background:#fafafa;box-sizing:border-box;"></div>
<div class="a" style="left:782px;top:149.7px;width:5px;height:9.8px;border:1px solid #aaa;border-right:none;box-sizing:border-box;"></div>
<div class="a" style="left:776px;top:552px;width:8px;height:1.6px;background:#666;"></div>
<div class="a" style="left:798.4px;top:123.3px;width:1.8px;height:461px;background:#808080;"></div>
<!-- simplot chart frame -->
<div class="a" style="left:801px;top:125px;width:1101px;height:431px;border:1px solid #b9b9b9;border-top:2px solid #c4c4c4;border-bottom:2px solid #c4c4c4;background:#fdfdfd;box-sizing:border-box;"></div>
<!-- tab strip -->
<div class="a" style="left:801px;top:557px;width:1105px;height:28px;background:#fdfdfd;"></div>
<div class="a" style="left:805px;top:557px;width:102px;height:27px;background:#f1f1f1;border-right:1px solid #9c9c9c;border-bottom:1px solid #9c9c9c;box-sizing:border-box;"></div>
<div class="t" style="left:847px;top:567px;font-size:13.5px;color:#222;"><span class="sx" style="transform:scaleX(.9)">Chart1</span></div>
<svg style="left:0;top:0;" width="1920" height="600" viewBox="0 0 1920 600" font-family="Liberation Sans, sans-serif">
  <text x="1257.5" y="160.5" font-family="Liberation Serif, serif" font-weight="bold" font-size="26" fill="#1f33b4" textLength="189" lengthAdjust="spacingAndGlyphs">System.Linepack</text>
  <g stroke="#2b2b2b" stroke-width="1.5" stroke-dasharray="5.2 4.4" fill="none">
    <path d="M871 180.8 L1866 180.8"/>
    <path d="M871 219.1 L1866 219.1"/>
    <path d="M871 257.5 L1866 257.5"/>
    <path d="M871 295.9 L1866 295.9"/>
    <path d="M871 334.2 L1866 334.2"/>
    <path d="M871 372.6 L1866 372.6"/>
    <path d="M871 411.0 L1866 411.0"/>
    <path d="M871 449.3 L1866 449.3"/>
    <path d="M871 487.7 L1866 487.7"/>
    <path d="M1021.2 176 L1021.2 501"/>
    <path d="M1161.9 176 L1161.9 501"/>
    <path d="M1302.6 176 L1302.6 501"/>
    <path d="M1443.3 176 L1443.3 501"/>
    <path d="M1584.0 176 L1584.0 501"/>
    <path d="M1724.7 176 L1724.7 501"/>
  </g>
  <path d="M880.7 176 L880.7 499" stroke="#2b2b2b" stroke-width="1.5" stroke-dasharray="5.2 4.4"/>
  <path d="M880.7 499.5 L880.7 514.8 M1021.2 503 L1021.2 514.8 M1161.9 503 L1161.9 514.8 M1302.6 503 L1302.6 514.8 M1443.3 503 L1443.3 514.8 M1584 503 L1584 514.8 M1724.7 503 L1724.7 514.8" stroke="#1c1c1c" stroke-width="1.6"/>
  <path d="M881 190.3 L891 190.3 M881 199.9 L891 199.9 M881 209.5 L891 209.5 M881 228.7 L891 228.7 M881 238.3 L891 238.3 M881 247.9 L891 247.9 M881 267.1 L891 267.1 M881 276.7 L891 276.7 M881 286.3 L891 286.3 M881 305.5 L891 305.5 M881 315.0 L891 315.0 M881 324.6 L891 324.6 M881 343.8 L891 343.8 M881 353.4 L891 353.4 M881 363.0 L891 363.0 M881 382.2 L891 382.2 M881 391.8 L891 391.8 M881 401.4 L891 401.4 M881 420.6 L891 420.6 M881 430.2 L891 430.2 M881 439.7 L891 439.7 M881 458.9 L891 458.9 M881 468.5 L891 468.5 M881 478.1 L891 478.1 M881 497.3 L891 497.3" stroke="#2b2b2b" stroke-width="1.2"/>
  <path d="M950.9 492.5 L950.9 502.5 M1091.5 492.5 L1091.5 502.5 M1232.2 492.5 L1232.2 502.5 M1372.9 492.5 L1372.9 502.5 M1513.7 492.5 L1513.7 502.5 M1654.3 492.5 L1654.3 502.5 M1795.0 492.5 L1795.0 502.5" stroke="#222" stroke-width="1.4"/>
  <g font-weight="bold" font-size="15.5" fill="#1f33b4"><text x="865.5" y="184.6" text-anchor="end" textLength="31" lengthAdjust="spacingAndGlyphs">6.96</text><text x="865.5" y="223.0" text-anchor="end" textLength="31" lengthAdjust="spacingAndGlyphs">6.94</text><text x="865.5" y="261.4" text-anchor="end" textLength="31" lengthAdjust="spacingAndGlyphs">6.92</text><text x="865.5" y="299.8" text-anchor="end" textLength="31" lengthAdjust="spacingAndGlyphs">6.90</text><text x="865.5" y="338.1" text-anchor="end" textLength="31" lengthAdjust="spacingAndGlyphs">6.88</text><text x="865.5" y="376.5" text-anchor="end" textLength="31" lengthAdjust="spacingAndGlyphs">6.86</text><text x="865.5" y="414.9" text-anchor="end" textLength="31" lengthAdjust="spacingAndGlyphs">6.84</text><text x="865.5" y="453.2" text-anchor="end" textLength="31" lengthAdjust="spacingAndGlyphs">6.82</text><text x="865.5" y="491.6" text-anchor="end" textLength="31" lengthAdjust="spacingAndGlyphs">6.80</text></g>
  <g font-weight="bold" font-size="16" fill="#1f33b4"><text x="880.0" y="527.6" text-anchor="middle">0</text><text x="1020.7" y="527.6" text-anchor="middle">1</text><text x="1161.4" y="527.6" text-anchor="middle">2</text><text x="1302.1" y="527.6" text-anchor="middle">3</text><text x="1442.8" y="527.6" text-anchor="middle">4</text><text x="1583.5" y="527.6" text-anchor="middle">5</text><text x="1724.2" y="527.6" text-anchor="middle">6</text></g>
  <text x="1372" y="548" text-anchor="middle" font-weight="bold" font-size="15" fill="#1f33b4" textLength="62" lengthAdjust="spacingAndGlyphs">Minutes</text>
  <text transform="translate(826 366) rotate(-90)" font-weight="bold" font-size="15" fill="#1f33b4" textLength="58" lengthAdjust="spacingAndGlyphs">Msm^3</text>
  <path d="M881 381 L900 381.5 L930 385 L960 390.5 L990 397 L1021 405 L1060 417 L1100 430 L1162 451 L1200 465 L1250 481 L1302.5 499 L1320 485 L1340 447 L1360 407 L1380 366 L1394.8 330 L1412 296 L1430 265 L1443.5 247 L1456 232 L1468 219.5 L1477 207 L1497.7 193.5 L1515 185.5 L1529 181 L1548 179 L1565 180.5 L1584 186.3 L1620 198 L1650 209 L1677.4 219.5 L1700 228 L1725 237 L1760 247.5 L1801 257.5 L1830 266 L1866 277" stroke="#1c2fd0" stroke-width="2.4" fill="none" stroke-linejoin="round"/>
  <path d="M882 380 L890 371" stroke="#444" stroke-width="1"/>
  <text x="890" y="369.5" font-weight="bold" font-size="10.5" fill="#222" textLength="95" lengthAdjust="spacingAndGlyphs">System.Linepack</text>
  <!-- legend -->
  <rect x="812.7" y="136.5" width="204" height="41" fill="#e9e9e9" stroke="#4a4a4a" stroke-width="1.4"/>
  <circle cx="833.5" cy="147" r="5" fill="#1a22e0"/>
  <text x="848" y="152.5" font-size="17" fill="#222" textLength="134" lengthAdjust="spacingAndGlyphs">System.Linepack</text>
  <text x="848" y="173" font-size="17" fill="#222" textLength="38.5" lengthAdjust="spacingAndGlyphs">Time</text>
  <text x="1004" y="173" font-size="17" fill="#222" text-anchor="end">-1</text>
</svg>

<!-- ===== LOWER WINDOW ===== -->
<!-- lower window frame -->
<div class="a" style="left:16px;top:588px;width:1896px;height:428px;background:#dfe3ea;"></div>
<div class="a" style="left:16px;top:588px;width:1px;height:428px;background:#6e6e6e;"></div>
<div class="a" style="left:16px;top:588px;width:755px;height:1.5px;background:#5e5e5e;"></div>
<div class="a" style="left:17px;top:590px;width:10px;height:425px;background:#b9c4d8;"></div>
<div class="a" style="left:27px;top:590px;width:1.5px;height:420px;background:#8f949d;"></div>
<div class="a" style="left:1910.6px;top:59px;width:1.5px;height:958px;background:#1c1c1c;"></div>
<div class="a" style="left:1912.1px;top:52px;width:8px;height:995px;background:#ebebeb;"></div>
<!-- ribbon strip -->
<div class="a" style="left:28.5px;top:589.5px;width:1876px;height:21px;background:linear-gradient(#e0e4ea,#ebeef2 50%,#e5e8ee);"></div>
<div class="a" style="left:771px;top:589.8px;width:1140px;height:6px;background:linear-gradient(#d3d6dc,#e6e9ef);"></div>
<div class="t" style="left:88px;top:590.5px;font-size:13.5px;color:#b2b5ba;">Show</div>
<div class="t" style="left:285px;top:590.5px;font-size:13.5px;color:#b2b5ba;">Navigation</div>
<div class="t" style="left:622px;top:590.5px;font-size:13.5px;color:#b2b5ba;">Display</div>
<div class="t" style="left:877px;top:590.5px;font-size:13.5px;color:#b2b5ba;">Export</div>
<div class="t" style="left:1061px;top:590.5px;font-size:13.5px;color:#b2b5ba;">Print</div>
<div class="a" style="left:177px;top:591px;width:1px;height:8px;background:#c9cdd4;"></div>
<div class="a" style="left:455px;top:591px;width:1px;height:8px;background:#c9cdd4;"></div>
<div class="a" style="left:960px;top:591px;width:1px;height:8px;background:#c9cdd4;"></div>
<div class="a" style="left:1184px;top:591px;width:1px;height:8px;background:#c9cdd4;"></div>
<!-- gray-blue band -->
<div class="a" style="left:28.5px;top:610px;width:1875px;height:398px;background:#a8b1bf;"></div>
<div class="a" style="left:1903.5px;top:610px;width:7.5px;height:405px;background:#e4e7ec;"></div>
<div class="a" style="left:28.5px;top:1008px;width:1882px;height:6.5px;background:linear-gradient(#c5cad4,#e9ebef);"></div>
<!-- left panel -->
<div class="a" style="left:33.5px;top:640.5px;width:263px;height:367.5px;background:#fcfcfc;"></div>
<div class="a" style="left:33.5px;top:617px;width:55px;height:25px;background:#fcfcfc;"></div>
<div class="a" style="left:89.5px;top:619.5px;width:88px;height:21px;background:#ededed;border:1px solid #c2c4c8;border-bottom:1px solid #b5b8be;box-sizing:border-box;"></div>
<div class="a" style="left:179px;top:619.5px;width:63.5px;height:21px;background:#ededed;border:1px solid #c2c4c8;border-bottom:1px solid #b5b8be;box-sizing:border-box;"></div>
<div class="t" style="left:41.5px;top:621.5px;font-size:14px;color:#1e1e1e;"><span class="sx" style="transform:scaleX(.93)">Charts</span></div>
<div class="t" style="left:94px;top:622.5px;font-size:14px;color:#1e1e1e;"><span class="sx" style="transform:scaleX(.915)">Data Sources</span></div>
<div class="t" style="left:185.5px;top:622.5px;font-size:14px;color:#1e1e1e;"><span class="sx" style="transform:scaleX(.93)">Overlays</span></div>
<div class="t" style="left:36.5px;top:645.5px;font-size:14px;color:#1e1e1e;"><span class="sx" style="transform:scaleX(.93)">Categories:</span></div>
<div class="a" style="left:36px;top:664.5px;width:258px;height:107.5px;border:1px solid #c9ccd2;background:#fcfcfc;box-sizing:border-box;"></div>
<div class="a" style="left:38px;top:687.5px;width:234.5px;height:22px;background:#e9e9e9;"></div>
<div class="a" style="left:272.7px;top:666px;width:19.8px;height:104.5px;background:#f1f1f1;"></div>
<div class="a" style="left:272.7px;top:686.5px;width:18.5px;height:51.5px;background:#c9c9c9;"></div>
<svg style="left:278px;top:673px;" width="9" height="6" viewBox="0 0 9 6"><path d="M1 5 L4.5 1.5 L8 5" stroke="#9a9a9a" stroke-width="1.3" fill="none"/></svg>
<svg style="left:278px;top:757px;" width="9" height="6" viewBox="0 0 9 6"><path d="M1 1 L4.5 4.5 L8 1" stroke="#9a9a9a" stroke-width="1.3" fill="none"/></svg>
<div class="a" style="left:38px;top:666px;width:234px;height:105px;overflow:hidden;">
  <div class="t" style="left:6px;top:4.5px;font-size:14px;color:#1e1e1e;"><span class="sx" style="transform:scaleX(.95)">Time</span></div>
  <div class="t" style="left:6px;top:26.5px;font-size:14px;color:#1e1e1e;"><span class="sx" style="transform:scaleX(.95)">Distance</span></div>
  <div class="t" style="left:6px;top:48.5px;font-size:14px;color:#1e1e1e;"><span class="sx" style="transform:scaleX(.97)">Centrifugal Compressor</span></div>
  <div class="t" style="left:6px;top:70.5px;font-size:14px;color:#1e1e1e;"><span class="sx" style="transform:scaleX(.965)">Reciprocating Compressor</span></div>
  <div class="t" style="left:6px;top:92px;font-size:14px;color:#1e1e1e;"><span class="sx" style="transform:scaleX(.95)">Phase Diagram</span></div>
</div>
<div class="a" style="left:36px;top:778.5px;width:258px;height:227px;border:1px solid #b9bec8;background:#fcfcfc;box-sizing:border-box;"></div>
<div class="a" style="left:37px;top:779.5px;width:256px;height:28.5px;background:#f7f7f7;border-bottom:1px solid #e1e1e1;box-sizing:border-box;"></div>
<div class="a" style="left:37px;top:808px;width:256px;height:20px;background:#e7e7e7;"></div>
<div class="t" style="left:43px;top:786.5px;font-size:14px;color:#1e1e1e;"><span class="sx" style="transform:scaleX(.97)">Name</span></div>
<div class="t" style="left:40.5px;top:810.5px;font-size:14px;color:#1e1e1e;"><span class="sx" style="transform:scaleX(.87)">DISTANCE</span></div>
<!-- chart panel -->
<div class="a" style="left:303px;top:646.5px;width:1594px;height:361.5px;background:#fcfcfc;"></div>
<div class="a" style="left:303px;top:617px;width:100px;height:30px;background:#fcfcfc;"></div>
<div class="t" style="left:310.5px;top:624px;font-size:14px;color:#1e1e1e;"><span class="sx" style="transform:scaleX(.87)">DISTANCE</span></div>
<svg style="left:379.5px;top:625.5px;" width="11" height="11" viewBox="0 0 11 11"><path d="M1 1 L10 10 M10 1 L1 10" stroke="#1a1a1a" stroke-width="1.6"/></svg>
<svg style="left:0;top:0;" width="1920" height="1080" viewBox="0 0 1920 1080" font-family="Liberation Sans, sans-serif">
  <path d="M425.4 695 L425.4 929 M488.2 695 L488.2 929 M551.0 695 L551.0 929 M613.7 695 L613.7 929 M676.5 695 L676.5 929 M739.2 695 L739.2 929 M802.0 695 L802.0 929 M864.7 695 L864.7 929 M927.5 695 L927.5 929 M990.2 695 L990.2 929 M1053.0 695 L1053.0 929 M1115.7 695 L1115.7 929 M1178.5 695 L1178.5 929 M1241.2 695 L1241.2 929 M1304.0 695 L1304.0 929 M1366.7 695 L1366.7 929 M1429.5 695 L1429.5 929 M1492.2 695 L1492.2 929 M1555.0 695 L1555.0 929 M1617.7 695 L1617.7 929 M1680.5 695 L1680.5 929 M1743.2 695 L1743.2 929 M1806.0 695 L1806.0 929 M1868.7 695 L1868.7 929" stroke="#dcdcdc" stroke-width="1" stroke-dasharray="3 2" fill="none"/>
  <path d="M363.5 914.2 L1869 914.2 M363.5 885.1 L1869 885.1 M363.5 856.0 L1869 856.0 M363.5 826.8 L1869 826.8 M363.5 797.7 L1869 797.7 M363.5 768.5 L1869 768.5 M363.5 739.4 L1869 739.4 M363.5 710.2 L1869 710.2" stroke="#e3e3e3" stroke-width="1.2" fill="none"/>
  <path d="M363.5 899.7 L1869 899.7 M363.5 870.5 L1869 870.5 M363.5 841.4 L1869 841.4 M363.5 812.2 L1869 812.2 M363.5 783.1 L1869 783.1 M363.5 753.9 L1869 753.9 M363.5 724.8 L1869 724.8" stroke="#ececec" stroke-width="1" fill="none"/>
  <path d="M362.7 695 L362.7 929.5 L1869 929.5" stroke="#4a4a4a" stroke-width="1.4" fill="none"/>
  <path d="M362.7 929.5 L362.7 933.5 M425.4 929.5 L425.4 933.5 M488.2 929.5 L488.2 933.5 M551.0 929.5 L551.0 933.5 M613.7 929.5 L613.7 933.5 M676.5 929.5 L676.5 933.5 M739.2 929.5 L739.2 933.5 M802.0 929.5 L802.0 933.5 M864.7 929.5 L864.7 933.5 M927.5 929.5 L927.5 933.5 M990.2 929.5 L990.2 933.5 M1053.0 929.5 L1053.0 933.5 M1115.7 929.5 L1115.7 933.5 M1178.5 929.5 L1178.5 933.5 M1241.2 929.5 L1241.2 933.5 M1304.0 929.5 L1304.0 933.5 M1366.7 929.5 L1366.7 933.5 M1429.5 929.5 L1429.5 933.5 M1492.2 929.5 L1492.2 933.5 M1555.0 929.5 L1555.0 933.5 M1617.7 929.5 L1617.7 933.5 M1680.5 929.5 L1680.5 933.5 M1743.2 929.5 L1743.2 933.5 M1806.0 929.5 L1806.0 933.5 M1868.7 929.5 L1868.7 933.5 M394.1 929.5 L394.1 932 M456.8 929.5 L456.8 932 M519.6 929.5 L519.6 932 M582.3 929.5 L582.3 932 M645.1 929.5 L645.1 932 M707.8 929.5 L707.8 932 M770.6 929.5 L770.6 932 M833.3 929.5 L833.3 932 M896.1 929.5 L896.1 932 M958.8 929.5 L958.8 932 M1021.6 929.5 L1021.6 932 M1084.3 929.5 L1084.3 932 M1147.1 929.5 L1147.1 932 M1209.8 929.5 L1209.8 932 M1272.6 929.5 L1272.6 932 M1335.3 929.5 L1335.3 932 M1398.1 929.5 L1398.1 932 M1460.8 929.5 L1460.8 932 M1523.6 929.5 L1523.6 932 M1586.3 929.5 L1586.3 932 M1649.1 929.5 L1649.1 932 M1711.8 929.5 L1711.8 932 M1774.6 929.5 L1774.6 932 M1837.3 929.5 L1837.3 932 M358.5 914.2 L362.7 914.2 M358.5 885.1 L362.7 885.1 M358.5 856.0 L362.7 856.0 M358.5 826.8 L362.7 826.8 M358.5 797.7 L362.7 797.7 M358.5 768.5 L362.7 768.5 M358.5 739.4 L362.7 739.4 M358.5 710.2 L362.7 710.2 M360.2 899.7 L362.7 899.7 M360.2 870.5 L362.7 870.5 M360.2 841.4 L362.7 841.4 M360.2 812.2 L362.7 812.2 M360.2 783.1 L362.7 783.1 M360.2 753.9 L362.7 753.9 M360.2 724.8 L362.7 724.8" stroke="#4a4a4a" stroke-width="1" fill="none"/>
  <g font-size="12" fill="#333"><text x="362.7" y="945" text-anchor="middle">0</text><text x="425.4" y="945" text-anchor="middle">10000</text><text x="488.2" y="945" text-anchor="middle">20000</text><text x="551.0" y="945" text-anchor="middle">30000</text><text x="613.7" y="945" text-anchor="middle">40000</text><text x="676.5" y="945" text-anchor="middle">50000</text><text x="739.2" y="945" text-anchor="middle">60000</text><text x="802.0" y="945" text-anchor="middle">70000</text><text x="864.7" y="945" text-anchor="middle">80000</text><text x="927.5" y="945" text-anchor="middle">90000</text><text x="990.2" y="945" text-anchor="middle">100000</text><text x="1053.0" y="945" text-anchor="middle">110000</text><text x="1115.7" y="945" text-anchor="middle">120000</text><text x="1178.5" y="945" text-anchor="middle">130000</text><text x="1241.2" y="945" text-anchor="middle">140000</text><text x="1304.0" y="945" text-anchor="middle">150000</text><text x="1366.7" y="945" text-anchor="middle">160000</text><text x="1429.5" y="945" text-anchor="middle">170000</text><text x="1492.2" y="945" text-anchor="middle">180000</text><text x="1555.0" y="945" text-anchor="middle">190000</text><text x="1617.7" y="945" text-anchor="middle">200000</text><text x="1680.5" y="945" text-anchor="middle">210000</text><text x="1743.2" y="945" text-anchor="middle">220000</text><text x="1806.0" y="945" text-anchor="middle">230000</text><text x="1868.7" y="945" text-anchor="middle">240000</text><text x="357" y="918.5" text-anchor="end">3600</text><text x="357" y="889.4" text-anchor="end">3800</text><text x="357" y="860.2" text-anchor="end">4000</text><text x="357" y="831.1" text-anchor="end">4200</text><text x="357" y="802.0" text-anchor="end">4400</text><text x="357" y="772.8" text-anchor="end">4600</text><text x="357" y="743.6" text-anchor="end">4800</text><text x="357" y="714.5" text-anchor="end">5000</text></g>
  <text x="1114.5" y="959.5" text-anchor="middle" font-size="12" fill="#333">Length (m)</text>
  <text transform="translate(328.5 853.5) rotate(-90)" font-size="12" fill="#333" textLength="81" lengthAdjust="spacingAndGlyphs">Pressure (kPa)</text>
  <text x="1887" y="671.5" text-anchor="end" font-size="13.5" font-weight="bold" fill="#111" textLength="130" lengthAdjust="spacingAndGlyphs">Mainline Pressure</text>
  <!-- series -->
  <path d="M665.5 735.5 L1271.5 787.5 L1271.5 804 Z" fill="#2e9305"/>
  <path d="M1271.5 714.5 L1370.6 774.0 L1526.0 856.5 L1772.5 918.6 L1772.5 878.4 L1527.7 830.8 L1370.6 764.8 L1271.5 714.5 Z" fill="#45a51c" fill-opacity=".38"/>
  <path d="M1271.5 714.5 L1370.6 774.0 L1526.0 856.5 L1772.5 918.6 L1772.5 897.2 L1526.9 842.8 L1370.6 769.1 L1271.5 714.5 Z" fill="#33970a" fill-opacity=".8"/>
  <g>
    <path d="M1271.5 714.5 L1370.6 774.0 L1526.0 856.5 L1772.5 918.6" stroke="#35990b" stroke-opacity="0.95" stroke-width="1.25" fill="none"/>
    <path d="M1271.5 714.5 L1370.6 774.0 L1526.0 856.4 L1772.5 918.5" stroke="#35990b" stroke-opacity="0.94" stroke-width="1.25" fill="none"/>
    <path d="M1271.5 714.5 L1370.6 773.9 L1526.0 856.3 L1772.5 918.2" stroke="#35990b" stroke-opacity="0.93" stroke-width="1.25" fill="none"/>
    <path d="M1271.5 714.5 L1370.6 773.8 L1526.0 856.0 L1772.5 917.9" stroke="#35990b" stroke-opacity="0.92" stroke-width="1.25" fill="none"/>
    <path d="M1271.5 714.5 L1370.6 773.7 L1526.0 855.7 L1772.5 917.4" stroke="#35990b" stroke-opacity="0.90" stroke-width="1.25" fill="none"/>
    <path d="M1271.5 714.5 L1370.6 773.6 L1526.1 855.4 L1772.5 916.9" stroke="#35990b" stroke-opacity="0.89" stroke-width="1.25" fill="none"/>
    <path d="M1271.5 714.5 L1370.6 773.5 L1526.1 855.0 L1772.5 916.2" stroke="#35990b" stroke-opacity="0.88" stroke-width="1.25" fill="none"/>
    <path d="M1271.5 714.5 L1370.6 773.3 L1526.1 854.5 L1772.5 915.5" stroke="#35990b" stroke-opacity="0.86" stroke-width="1.25" fill="none"/>
    <path d="M1271.5 714.5 L1370.6 773.1 L1526.2 854.0 L1772.5 914.8" stroke="#35990b" stroke-opacity="0.85" stroke-width="1.25" fill="none"/>
    <path d="M1271.5 714.5 L1370.6 772.9 L1526.2 853.5 L1772.5 913.9" stroke="#35990b" stroke-opacity="0.83" stroke-width="1.25" fill="none"/>
    <path d="M1271.5 714.5 L1370.6 772.7 L1526.2 852.9 L1772.5 913.0" stroke="#35990b" stroke-opacity="0.81" stroke-width="1.25" fill="none"/>
    <path d="M1271.5 714.5 L1370.6 772.5 L1526.3 852.3 L1772.5 912.0" stroke="#35990b" stroke-opacity="0.80" stroke-width="1.25" fill="none"/>
    <path d="M1271.5 714.5 L1370.6 772.3 L1526.3 851.6 L1772.5 910.9" stroke="#35990b" stroke-opacity="0.78" stroke-width="1.25" fill="none"/>
    <path d="M1271.5 714.5 L1370.6 772.0 L1526.4 850.9 L1772.5 909.8" stroke="#35990b" stroke-opacity="0.76" stroke-width="1.25" fill="none"/>
    <path d="M1271.5 714.5 L1370.6 771.7 L1526.4 850.1 L1772.5 908.7" stroke="#35990b" stroke-opacity="0.75" stroke-width="1.25" fill="none"/>
    <path d="M1271.5 714.5 L1370.6 771.4 L1526.5 849.4 L1772.5 907.4" stroke="#35990b" stroke-opacity="0.73" stroke-width="1.25" fill="none"/>
    <path d="M1271.5 714.5 L1370.6 771.2 L1526.5 848.5 L1772.5 906.1" stroke="#35990b" stroke-opacity="0.71" stroke-width="1.25" fill="none"/>
    <path d="M1271.5 714.5 L1370.6 770.8 L1526.6 847.7 L1772.5 904.8" stroke="#35990b" stroke-opacity="0.69" stroke-width="1.25" fill="none"/>
    <path d="M1271.5 714.5 L1370.6 770.5 L1526.6 846.8 L1772.5 903.4" stroke="#35990b" stroke-opacity="0.68" stroke-width="1.25" fill="none"/>
    <path d="M1271.5 714.5 L1370.6 770.2 L1526.7 845.8 L1772.5 901.9" stroke="#35990b" stroke-opacity="0.66" stroke-width="1.25" fill="none"/>
    <path d="M1271.5 714.5 L1370.6 769.8 L1526.8 844.9 L1772.5 900.4" stroke="#35990b" stroke-opacity="0.64" stroke-width="1.25" fill="none"/>
    <path d="M1271.5 714.5 L1370.6 769.5 L1526.8 843.8 L1772.5 898.8" stroke="#35990b" stroke-opacity="0.62" stroke-width="1.25" fill="none"/>
    <path d="M1271.5 714.5 L1370.6 769.1 L1526.9 842.8 L1772.5 897.2" stroke="#35990b" stroke-opacity="0.60" stroke-width="1.25" fill="none"/>
    <path d="M1271.5 714.5 L1370.6 768.7 L1527.0 841.7 L1772.5 895.5" stroke="#35990b" stroke-opacity="0.58" stroke-width="1.25" fill="none"/>
    <path d="M1271.5 714.5 L1370.6 768.3 L1527.0 840.6 L1772.5 893.7" stroke="#35990b" stroke-opacity="0.56" stroke-width="1.25" fill="none"/>
    <path d="M1271.5 714.5 L1370.6 767.9 L1527.1 839.5 L1772.5 892.0" stroke="#35990b" stroke-opacity="0.54" stroke-width="1.25" fill="none"/>
    <path d="M1271.5 714.5 L1370.6 767.5 L1527.2 838.3 L1772.5 890.1" stroke="#35990b" stroke-opacity="0.52" stroke-width="1.25" fill="none"/>
    <path d="M1271.5 714.5 L1370.6 767.1 L1527.3 837.1 L1772.5 888.2" stroke="#35990b" stroke-opacity="0.50" stroke-width="1.25" fill="none"/>
    <path d="M1271.5 714.5 L1370.6 766.6 L1527.4 835.9 L1772.5 886.3" stroke="#35990b" stroke-opacity="0.48" stroke-width="1.25" fill="none"/>
    <path d="M1271.5 714.5 L1370.6 766.2 L1527.4 834.6 L1772.5 884.3" stroke="#35990b" stroke-opacity="0.46" stroke-width="1.25" fill="none"/>
    <path d="M1271.5 714.5 L1370.6 765.7 L1527.5 833.3 L1772.5 882.3" stroke="#35990b" stroke-opacity="0.44" stroke-width="1.25" fill="none"/>
    <path d="M1271.5 714.5 L1370.6 765.2 L1527.6 832.0 L1772.5 880.2" stroke="#35990b" stroke-opacity="0.42" stroke-width="1.25" fill="none"/>
    <path d="M1271.5 714.5 L1370.6 764.7 L1527.7 830.6 L1772.5 878.1" stroke="#35990b" stroke-opacity="0.40" stroke-width="1.25" fill="none"/>
    <path d="M1271.5 714.5 L1370.6 764.2 L1527.8 829.2 L1772.5 875.9" stroke="#35990b" stroke-opacity="0.38" stroke-width="1.25" fill="none"/>
    <path d="M1271.5 714.5 L1370.6 763.7 L1527.9 827.8 L1772.5 873.7" stroke="#35990b" stroke-opacity="0.36" stroke-width="1.25" fill="none"/>
    <path d="M1271.5 714.5 L1370.6 763.2 L1528.0 826.3 L1772.5 871.4" stroke="#35990b" stroke-opacity="0.34" stroke-width="1.25" fill="none"/>
    <path d="M1271.5 714.5 L1370.6 762.7 L1528.1 824.9 L1772.5 869.1" stroke="#35990b" stroke-opacity="0.32" stroke-width="1.25" fill="none"/>
    <path d="M1271.5 714.5 L1370.6 762.1 L1528.2 823.3 L1772.5 866.7" stroke="#35990b" stroke-opacity="0.30" stroke-width="1.25" fill="none"/>
    <path d="M1271.5 714.5 L1370.6 761.6 L1528.3 821.8 L1772.5 864.3" stroke="#35990b" stroke-opacity="0.28" stroke-width="1.25" fill="none"/>
    <path d="M1271.5 714.5 L1370.6 761.0 L1528.4 820.2 L1772.5 861.8" stroke="#35990b" stroke-opacity="0.26" stroke-width="1.25" fill="none"/>
    <path d="M1271.5 714.5 L1370.6 760.5 L1528.5 818.7 L1772.5 859.4" stroke="#35990b" stroke-opacity="0.23" stroke-width="1.25" fill="none"/>
    <path d="M1271.5 714.5 L1370.6 759.9 L1528.6 817.0 L1772.5 856.8" stroke="#35990b" stroke-opacity="0.21" stroke-width="1.25" fill="none"/>
    <path d="M1271.5 714.5 L1370.6 759.3 L1528.7 815.4 L1772.5 854.2" stroke="#35990b" stroke-opacity="0.19" stroke-width="1.25" fill="none"/>
    <path d="M1271.5 714.5 L1370.6 758.7 L1528.8 813.7 L1772.5 851.6" stroke="#35990b" stroke-opacity="0.17" stroke-width="1.25" fill="none"/>
  </g>
  <path d="M362.7 710.2 L664.9 853 L665.5 735.2 L1271.5 800 L1271.5 714.5 L1370.6 774 L1526 856.5 L1772.5 918.6 L1772.5 714.5 L1823.5 726" stroke="#2e9305" stroke-width="3.4" fill="none" stroke-linejoin="round"/>
  <!-- legend -->
  <path d="M1017.5 987 L1041.5 987" stroke="#2e9305" stroke-width="2.4"/>
  <rect x="1047.5" y="978.5" width="14" height="14" fill="#fff" stroke="#555" stroke-width="1"/>
  <path d="M1050 985.5 L1053.5 989.5 L1059.5 980.5" stroke="#111" stroke-width="1.8" fill="none"/>
  <text x="1066.5" y="991.3" font-size="12" fill="#222">Node Result Pressure</text>
</svg>

<!-- ===== BOTTOM TABS ===== -->
<div class="a" style="left:0;top:1009px;width:1911px;height:39px;background:#ececec;"></div>
<div class="a" style="left:0;top:1046px;width:1920px;height:1.2px;background:#d2d2d2;"></div>
<div class="a" style="left:0;top:1047.2px;width:472px;height:33px;background:#f1f1f1;"></div>
<div class="a" style="left:472px;top:1047.2px;width:1448px;height:33px;background:#fafafa;"></div>
<div class="a" style="left:471px;top:1048px;width:1.2px;height:32px;background:#b9b9b9;"></div>
<svg style="left:0;top:0;" width="1920" height="1080" viewBox="0 0 1920 1080" font-family="Liberation Sans, sans-serif">
  <!-- tab strip borders -->
  <path d="M10 1016.8 L115.5 1016.8" stroke="#545454" stroke-width="1.8"/>
  <path d="M222 1016.8 L1911 1016.8" stroke="#4e4e4e" stroke-width="1.8"/>
  <path d="M17.5 1041 L116 1041" stroke="#4a4a4a" stroke-width="1.9"/>
  <path d="M118 1043.2 L221.5 1043.2 L221.5 1017" stroke="#444" stroke-width="1.9" fill="none"/>
  <path d="M224 1040.6 L322.3 1040.6 L322.3 1017.5" stroke="#444" stroke-width="1.9" fill="none"/>
  <path d="M325 1040.6 L424.8 1040.6 L424.8 1017.5" stroke="#444" stroke-width="1.9" fill="none"/>
  <path d="M222.6 1018 L222.6 1040 M323.6 1018 L323.6 1040" stroke="#fafafa" stroke-width="1"/>
  <!-- log explorer icon -->
  <g fill="#f4f4fb" stroke="#2a2f9a" stroke-width="1.1">
    <rect x="20" y="1020.5" width="7" height="11"/><rect x="23.5" y="1023" width="7" height="11"/>
    <path d="M27 1025.5 L33 1025.5 L35.8 1028 L35.8 1037.5 L27 1037.5 Z"/>
  </g>
  <path d="M29 1030 L34 1030 M29 1032.5 L34 1032.5 M29 1035 L34 1035" stroke="#555" stroke-width=".8"/>
  <!-- map icon -->
  <path d="M123 1035 L134 1034 L131 1023" stroke="#1c2290" stroke-width="1.6" fill="none"/>
  <circle cx="123" cy="1035" r="2.8" fill="#e58c98" stroke="#7a3a44" stroke-width=".5"/>
  <circle cx="134" cy="1034.5" r="2.8" fill="#e58c98" stroke="#7a3a44" stroke-width=".5"/>
  <circle cx="132" cy="1023.5" r="2.8" fill="#e58c98" stroke="#7a3a44" stroke-width=".5"/>
  <!-- chart icon -->
  <path d="M224.5 1025 L227.5 1021.5 L227.5 1037 L224.5 1037 Z" fill="#f2f2f2" stroke="#111" stroke-width="1"/>
  <rect x="228" y="1027" width="4" height="9.5" fill="#1a24c8"/>
  <rect x="232.5" y="1022" width="4" height="14.5" fill="#ecec3a" stroke="#111" stroke-width=".8"/>
  <rect x="237" y="1025" width="3.6" height="11.5" fill="#e5929c" stroke="#111" stroke-width=".8"/>
  <path d="M224.5 1037.4 L242 1037.4 L242 1025" stroke="#111" stroke-width="1.6" fill="none"/>
  <!-- cs2 icon -->
  <rect x="328.5" y="1022" width="15" height="15" fill="#eaeaea" stroke="#111" stroke-width="1.6"/>
  <path d="M333 1021 L333 1038" stroke="#111" stroke-width="1.8"/>
  <path d="M335 1023 L341 1026.5 L335 1030 Z M335 1030.5 L341 1033.7 L335 1037 Z" fill="#3aa848" stroke="#111" stroke-width=".8"/>
  <path d="M327 1026.5 L333 1026.5 M327 1033.5 L333 1033.5" stroke="#111" stroke-width="1.4"/>
  <g font-size="14" fill="#2e2e2e">
    <text x="43.5" y="1034.8" textLength="67" lengthAdjust="spacingAndGlyphs">Log Explorer</text>
    <text x="159.5" y="1035.3" textLength="40" lengthAdjust="spacingAndGlyphs">Map - 4</text>
    <text x="268" y="1034.5" textLength="28.5" lengthAdjust="spacingAndGlyphs">Chart</text>
    <text x="373" y="1034.5" textLength="23.5" lengthAdjust="spacingAndGlyphs">CS2</text>
  </g>
  <!-- ===== bottom toolbar ===== -->
  <rect x="4.5" y="1052.0" width="1.3" height="1.3" fill="#b9b9b9"/><rect x="8" y="1053.0" width="1.1" height="1.1" fill="#cfcfcf"/><rect x="6.0" y="1055.7" width="1.3" height="1.3" fill="#b9b9b9"/><rect x="9.5" y="1056.7" width="1.1" height="1.1" fill="#cfcfcf"/><rect x="4.5" y="1059.4" width="1.3" height="1.3" fill="#b9b9b9"/><rect x="8" y="1060.4" width="1.1" height="1.1" fill="#cfcfcf"/><rect x="6.0" y="1063.1" width="1.3" height="1.3" fill="#b9b9b9"/><rect x="9.5" y="1064.1" width="1.1" height="1.1" fill="#cfcfcf"/><rect x="4.5" y="1066.8" width="1.3" height="1.3" fill="#b9b9b9"/><rect x="8" y="1067.8" width="1.1" height="1.1" fill="#cfcfcf"/><rect x="6.0" y="1070.5" width="1.3" height="1.3" fill="#b9b9b9"/><rect x="9.5" y="1071.5" width="1.1" height="1.1" fill="#cfcfcf"/><rect x="4.5" y="1074.2" width="1.3" height="1.3" fill="#b9b9b9"/><rect x="8" y="1075.2" width="1.1" height="1.1" fill="#cfcfcf"/><rect x="6.0" y="1077.9" width="1.3" height="1.3" fill="#b9b9b9"/><rect x="9.5" y="1078.9" width="1.1" height="1.1" fill="#cfcfcf"/>
  <path d="M15 1062.5 L24 1062.5 L24 1059.5 L31 1065.5 L24 1071.5 L24 1068.5 L15 1068.5 Z" fill="#5a5a5a" stroke="#1a1a1a" stroke-width="1.2" stroke-linejoin="round"/>
  <path d="M42 1064 L48 1064 L45 1067.4 Z" fill="#1a1a1a"/>
  <path d="M63.5 1057 L63.5 1066 L66 1064 L68 1068 L69.4 1067.3 L67.6 1063.5 L70.5 1063.5 Z" fill="#f6f6f6" stroke="#c6c6c6" stroke-width="1"/>
  <path d="M71 1071.5 L74.5 1065.5 L76.3 1066.8 L72.8 1072.5 Z" fill="#d5de6e" stroke="#c4c4c4" stroke-width=".6"/>
  <path d="M88.5 1053 L88.5 1080" stroke="#a9a9a9" stroke-width="1.2"/><path d="M89.8 1053 L89.8 1080" stroke="#fbfbfb" stroke-width="1.2"/>
  <path d="M103 1056.5 L103 1070 L106 1067.2 L108.6 1073 L110.8 1072 L108.2 1066.4 L112.4 1066.4 Z" fill="#fbfbfb" stroke="#cfcfcf" stroke-width="1.1" stroke-linejoin="round"/>
  <path d="M129 1068 Q127 1060 135 1059 Q142 1059.5 141.5 1067" stroke="#cdcdcd" stroke-width="1.4" fill="none" stroke-dasharray="3 1.3"/>
  <path d="M138.5 1066 L141.5 1070 L144 1065.5" stroke="#cdcdcd" stroke-width="1.3" fill="none"/>
  <path d="M132 1066 L137 1063" stroke="#cdcdcd" stroke-width="1.2"/>
  <path d="M160 1059 L172.5 1059 M157 1071.5 L172 1071.5 M160 1061 L157 1070 M171 1061 L170 1070 M162 1066 L168 1063" stroke="#c9c9c9" stroke-width="1.5" fill="none"/>
  <path d="M183 1053 L183 1080" stroke="#a9a9a9" stroke-width="1.2"/><path d="M184.3 1053 L184.3 1080" stroke="#fbfbfb" stroke-width="1.2"/>
  <!-- bucket -->
  <path d="M195 1064 L201 1058 L207 1064 L201 1069.5 Z" fill="#fbfbfb" stroke="#111" stroke-width="1.3" stroke-linejoin="round"/>
  <path d="M198 1060.5 Q197.5 1055.5 200.5 1056 Q203 1056.5 202 1062" stroke="#1a2090" stroke-width="1.3" fill="none"/>
  <path d="M205.5 1061.5 Q209.5 1064 208 1069 Q205.5 1067 205.5 1061.5" fill="#1a24b8"/>
  <rect x="190.5" y="1071" width="18.5" height="2.3" fill="#111"/>
  <path d="M219.4 1064 L225.4 1064 L222.4 1067.4 Z" fill="#1a1a1a"/>
  <!-- pen -->
  <path d="M241 1068 L247 1059 L251.5 1057.5 L251 1062 L245.5 1069.5 Z" fill="#2730b4" stroke="#111" stroke-width=".8"/>
  <path d="M249 1057 L252.5 1055.5 L252.5 1059.2 Z" fill="#e6e63a"/>
  <rect x="235" y="1066" width="5" height="2" fill="#2c35b8"/>
  <rect x="235" y="1070.5" width="18" height="2.3" fill="#111"/>
  <path d="M263.8 1064 L269.8 1064 L266.8 1067.4 Z" fill="#1a1a1a"/>
  <!-- dot -->
  <circle cx="288.6" cy="1060.8" r="3.2" fill="#1a24c8"/><circle cx="288.6" cy="1060.8" r="1.5" fill="#0c0c40"/>
  <rect x="280" y="1069.7" width="17.2" height="3.3" fill="#0c0c0c"/>
  <path d="M308.6 1064 L314.6 1064 L311.6 1067.4 Z" fill="#1a1a1a"/>
  <path d="M326.4 1053 L326.4 1080" stroke="#a9a9a9" stroke-width="1.2"/><path d="M327.7 1053 L327.7 1080" stroke="#fbfbfb" stroke-width="1.2"/>
  <path d="M336 1059.5 L350 1059.5" stroke="#111" stroke-width="1.5"/><path d="M336 1064 L350 1064" stroke="#111" stroke-width="2.3"/><path d="M336 1069.3 L350 1069.3" stroke="#111" stroke-width="3.4"/>
  <path d="M362 1064 L368 1064 L365 1067.4 Z" fill="#1a1a1a"/>
  <path d="M379.5 1058.5 L394.5 1058.5" stroke="#333" stroke-width="1.6"/>
  <path d="M379.5 1062 L394.5 1062" stroke="#333" stroke-width="1.4" stroke-dasharray="2.5 1.2"/>
  <path d="M379.5 1065.5 L394.5 1065.5" stroke="#333" stroke-width="1.4" stroke-dasharray="4 1.4"/>
  <path d="M379.5 1069 L394.5 1069" stroke="#333" stroke-width="1.4" stroke-dasharray="1.4 2"/>
  <path d="M406.6 1064 L412.6 1064 L409.6 1067.4 Z" fill="#1a1a1a"/>
  <g stroke="#161616" stroke-width="1.5" fill="none">
    <path d="M424.5 1058.5 L439.5 1058.5 M436.5 1055.8 L439.8 1058.5 L436.5 1061.2"/>
    <path d="M424.5 1064.3 L439.5 1064.3 M427.5 1061.6 L424.2 1064.3 L427.5 1067"/>
    <path d="M424.5 1071 L439.5 1071 M427.5 1068.3 L424.2 1071 L427.5 1073.7 M436.5 1068.3 L439.8 1071 L436.5 1073.7"/>
  </g>
  <path d="M451 1064 L457 1064 L454 1067.4 Z" fill="#1a1a1a"/>
</svg>

</body>
</html>
